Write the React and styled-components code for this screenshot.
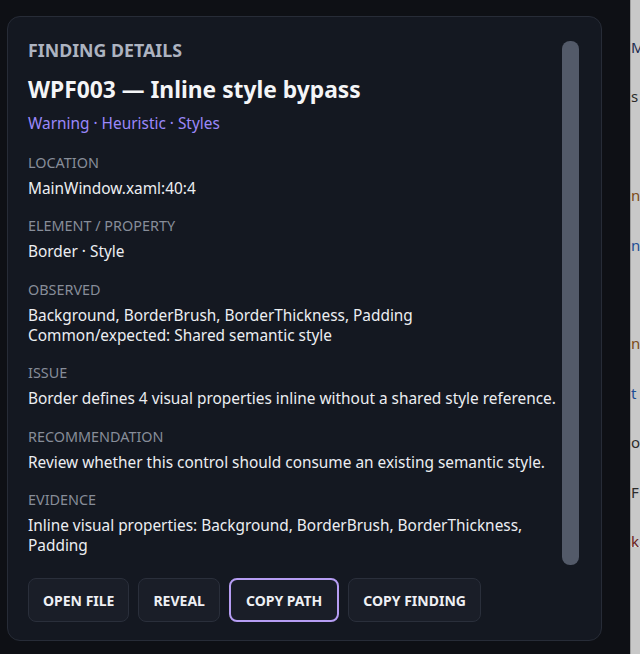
import styled, { createGlobalStyle } from "styled-components";

const GlobalStyle = createGlobalStyle`
  html {
    background: #c8c8c8;
  }
  html, body {
    margin: 0;
    overflow: hidden;
  }
  body {
    font-family: "Noto Sans", "Open Sans", sans-serif;
  }
`;

const fields = [
  { label: "Location", lines: ["MainWindow.xaml:40:4"] },
  { label: "Element / Property", lines: ["Border · Style"] },
  {
    label: "Observed",
    lines: [
      "Background, BorderBrush, BorderThickness, Padding",
      "Common/expected: Shared semantic style",
    ],
  },
  {
    label: "Issue",
    lines: ["Border defines 4 visual properties inline without a shared style reference."],
  },
  {
    label: "Recommendation",
    lines: ["Review whether this control should consume an existing semantic style."],
  },
  {
    label: "Evidence",
    lines: ["Inline visual properties: Background, BorderBrush, BorderThickness, Padding"],
  },
];

const actions = [
  { title: "Open file" },
  { title: "Reveal" },
  { title: "Copy path", active: true },
  { title: "Copy finding" },
];

// bits of the window behind, cut off at the screen edge
const peek = [
  { text: "Main", tone: "#1d2a4d" },
  { text: "s", tone: "#2b2b2b" },
  { text: "", tone: "#2b2b2b" },
  { text: "nd", tone: "#7b4b16" },
  { text: "np", tone: "#1e4f94" },
  { text: "", tone: "#2b2b2b" },
  { text: "nt", tone: "#7b4b16" },
  { text: "t", tone: "#1e4f94" },
  { text: "or", tone: "#2b2b2b" },
  { text: "F", tone: "#2b2b2b" },
  { text: "k", tone: "#6b1a1a" },
];

const FindingDetails = () => {
  return (
    <Panel>
      <ScrollArea>
        <Content>
          <Eyebrow>Finding details</Eyebrow>
          <Title>WPF003 — Inline style bypass</Title>
          <Meta>Warning · Heuristic · Styles</Meta>
          {fields.map((f) => (
            <Field key={f.label}>
              <Label>{f.label}</Label>
              {f.lines.map((l) => (
                <Value key={l}>{l}</Value>
              ))}
            </Field>
          ))}
        </Content>
        <Track>
          <Thumb />
        </Track>
      </ScrollArea>
      <Actions>
        {actions.map((a) => (
          <ActionButton key={a.title} $active={a.active}>
            {a.title}
          </ActionButton>
        ))}
      </Actions>
    </Panel>
  );
};

const App = () => {
  return (
    <>
      <GlobalStyle />
      <Screen>
        <Main>
          <FindingDetails />
        </Main>
        <Behind>
          {peek.map((p, i) => (
            <PeekRow key={i} $tone={p.tone}>
              {p.text}
            </PeekRow>
          ))}
          <PeekRule />
        </Behind>
      </Screen>
    </>
  );
};

export default App;

const Screen = styled.div`
  display: grid;
  grid-template-columns: 630px 10px;
  width: 640px;
  height: 654px;
  overflow: hidden;
`;

const Main = styled.div`
  box-sizing: border-box;
  padding: 16px 28px 13px 7px;
  display: flex;
  min-width: 0;
  background: #0e1015;
`;

const Panel = styled.section`
  flex: 1;
  display: flex;
  flex-direction: column;
  background: #141821;
  border: 1px solid #272c37;
  border-radius: 13px;
  padding: 20px 22px 18px 20px;
  min-width: 0;
`;

const ScrollArea = styled.div`
  flex: 1;
  display: flex;
  gap: 4px;
  min-height: 0;
`;

const Content = styled.div`
  flex: 1;
  min-width: 0;
  padding-top: 1px;
  color: #e7e9ee;
`;

const Track = styled.div`
  width: 17px;
  flex: none;
  padding: 4px 0;
  display: flex;
`;

const Thumb = styled.div`
  flex: 1;
  background: #535a69;
  border-radius: 8px;
`;

const Eyebrow = styled.h2`
  margin: 0;
  font-size: 17.8px;
  line-height: 24px;
  font-weight: 700;
  text-transform: uppercase;
  color: #adb3c0;
`;

const Title = styled.h1`
  margin: 13px 0 0;
  font-size: 22.8px;
  line-height: 30px;
  font-weight: 700;
  color: #f4f5f7;
`;

const Meta = styled.div`
  margin-top: 8px;
  font-size: 15.4px;
  line-height: 22px;
  color: #9b88fb;
`;

const Field = styled.div`
  margin-top: 18px;
  & + & {
    margin-top: 16.8px;
  }
`;

const Label = styled.div`
  font-size: 14.4px;
  line-height: 20px;
  text-transform: uppercase;
  color: #878d99;
  margin-bottom: 6px;
`;

const Value = styled.div`
  font-size: 15.4px;
  line-height: 20.5px;
  color: #eceef2;
`;

const Actions = styled.div`
  display: flex;
  gap: 9px;
  margin-top: 9px;
`;

const ActionButton = styled.button`
  height: 44px;
  padding: ${(p) => (p.$active ? "0 15px" : "0 14px")};
  border-radius: 8px;
  background: #1a1e28;
  border: ${(p) => (p.$active ? "2px solid #b69df3" : "1px solid #2a2f3b")};
  color: #eef0f4;
  font-family: inherit;
  font-size: 14px;
  font-weight: 700;
  text-transform: uppercase;
  cursor: pointer;
`;

const Behind = styled.aside`
  box-sizing: border-box;
  height: 654px;
  background: #c8c8c8;
  border-left: 1px solid #9e9e9e;
  padding-top: 36px;
  overflow: hidden;
  font-size: 15px;
`;

const PeekRow = styled.div`
  height: 49.4px;
  line-height: 22px;
  white-space: nowrap;
  color: ${(p) => p.$tone};
`;

const PeekRule = styled.div`
  height: 1px;
  margin-top: -33px;
  background: #e0e0e0;
`;
